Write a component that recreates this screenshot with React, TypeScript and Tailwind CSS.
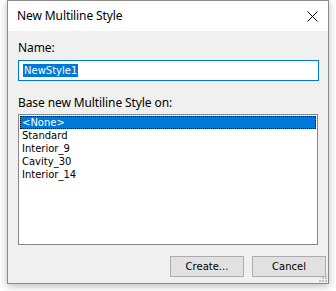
import React from "react";

const items = ["<None>", "Standard", "Interior_9", "Cavity_30", "Interior_14"];

export default function App() {
  const ui = { fontFamily: '"Noto Sans", "Open Sans", sans-serif' };
  const list = { fontFamily: '"DejaVu Sans", Verdana, sans-serif' };
  return (
    <div className="w-[336px] h-[291px] bg-white pl-[7px] overflow-hidden" style={ui}>
      <div className="w-[322px] h-[284px] border border-[#8a8a8a] bg-[#f0f0f0] flex flex-col shadow-[0_2px_8px_rgba(0,0,0,0.28)] relative">
        <div className="h-[30px] bg-white flex items-center justify-between pl-[9px] pr-[10px] shrink-0">
          <span className="text-[12px] text-black leading-none tracking-[-0.1px]">New Multiline Style</span>
          <svg width="11" height="11" viewBox="0 0 11 11" className="mt-[1px]">
            <path d="M0.5 0.5 L10.5 10.5 M10.5 0.5 L0.5 10.5" stroke="#000" strokeWidth="1" />
          </svg>
        </div>
        <div className="flex flex-col pl-[10px] pt-[9px] text-[12px] text-black">
          <div className="h-[16px] leading-[16px] tracking-[-0.1px]">Name:</div>
          <div className="mt-[4px] w-[301px] h-[21px] border border-[#0078d7] bg-white flex items-center pl-[4px]">
            <span className="bg-[#0078d7] text-white h-[13px] leading-[13px] px-[1px] text-[10px]" style={list}>
              NewStyle1
            </span>
          </div>
          <div className="mt-[14px] h-[16px] leading-[16px] tracking-[-0.1px]">Base new Multiline Style on:</div>
          <div className="mt-[3px] w-[300px] h-[131px] border border-[#828790] bg-white p-[1px]" style={list}>
            {items.map((it, i) => (
              <div
                key={it}
                className={
                  i === 0
                    ? "h-[13px] leading-[13px] text-[10px] pl-[2px] bg-[#0078d7] text-white outline-1 outline-dotted outline-[#000] -outline-offset-1"
                    : "h-[13px] leading-[13px] text-[10px] pl-[2px] text-black"
                }
              >
                {it}
              </div>
            ))}
          </div>
          <div className="mt-[11px] flex justify-end gap-[8px] pr-[2px]">
            <button className="w-[74px] h-[21px] bg-[#e1e1e1] border border-[#adadad] text-[10px] leading-none text-black" style={list}>
              Create...
            </button>
            <button className="w-[74px] h-[21px] bg-[#e1e1e1] border border-[#adadad] text-[10px] leading-none text-black" style={list}>
              Cancel
            </button>
          </div>
        </div>
        <svg width="8" height="8" viewBox="0 0 8 8" className="absolute right-[1px] bottom-[1px]">
          {[
            [6, 0],
            [6, 3],
            [3, 3],
            [6, 6],
            [3, 6],
            [0, 6],
          ].map(([x, y], k) => (
            <rect key={k} x={x} y={y} width="2" height="2" fill="#c4c4c4" />
          ))}
        </svg>
      </div>
    </div>
  );
}
